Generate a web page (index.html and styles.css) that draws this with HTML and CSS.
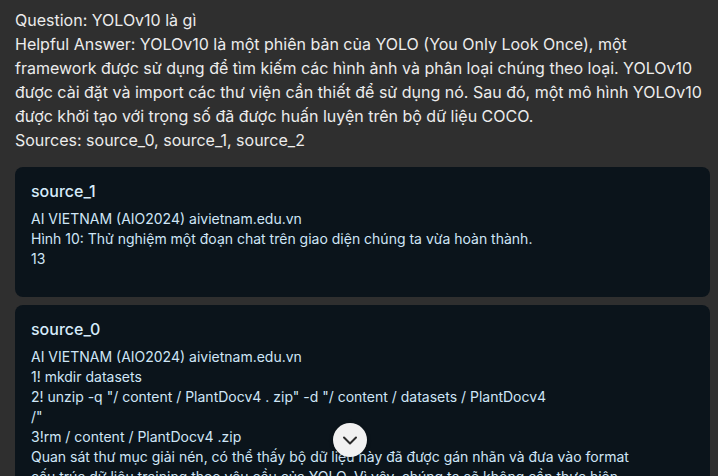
FILE: index.html
```html
<!DOCTYPE html>
<html lang="vi">
<head>
<meta charset="utf-8">
<title>Chat</title>
<link rel="stylesheet" href="styles.css">
</head>
<body>
<main class="page">
  <div class="answer">Question: YOLOv10 là gì
Helpful Answer: YOLOv10 là một phiên bản của YOLO (You Only Look Once), một framework được sử dụng để tìm kiếm các hình ảnh và phân loại chúng theo loại. YOLOv10 được cài đặt và import các thư viện cần thiết để sử dụng nó. Sau đó, một mô hình YOLOv10 được khởi tạo với trọng số đã được huấn luyện trên bộ dữ liệu COCO.
Sources: source_0, source_1, source_2</div>

  <section class="sources">
    <article class="card">
      <h3 class="card-title">source_1</h3>
      <div class="card-body">AI VIETNAM (AIO2024) aivietnam.edu.vn
Hình 10: Thử nghiệm một đoạn chat trên giao diện chúng ta vừa hoàn thành.
13</div>
    </article>
    <article class="card">
      <h3 class="card-title">source_0</h3>
      <div class="card-body">AI VIETNAM (AIO2024) aivietnam.edu.vn
1! mkdir datasets
2! unzip -q "/ content / PlantDocv4 . zip" -d "/ content / datasets / PlantDocv4
/"
3!rm / content / PlantDocv4 .zip
Quan sát thư mục giải nén, có thể thấy bộ dữ liệu này đã được gán nhãn và đưa vào format
cấu trúc dữ liệu training theo yêu cầu của YOLO. Vì vậy, chúng ta sẽ không cần thực hiện
thêm bước tiền xử lý nào nữa.</div>
    </article>
  </section>
</main>
<button class="scroll-down" aria-label="Scroll down">
  <svg width="24" height="24" viewBox="0 0 24 24" fill="none" stroke="currentColor" stroke-width="2" stroke-linecap="round" stroke-linejoin="round"><path d="M6 9.5l6 6 6-6"/></svg>
</button>
</body>
</html>
```
FILE: styles.css
```css
html, body {
  margin: 0;
  padding: 0;
  height: 100%;
  overflow: hidden;
  background: #2f2f2f;
}
body {
  font-family: Inter, "Noto Sans", sans-serif;
  color: #ececec;
}
.page {
  padding: 8px 8px 0 15px;
  display: flex;
  flex-direction: column;
  gap: 15px;
}
.answer {
  font-size: 16px;
  line-height: 24px;
  white-space: pre-line;
}
.sources {
  display: flex;
  flex-direction: column;
  gap: 8px;
}
.card {
  background: #0b141b;
  border-radius: 8px;
  padding: 14px 16px 28px 16px;
  color: #cfe6f7;
}
.card-title {
  margin: 0 0 8px 0;
  font-size: 16px;
  line-height: 20px;
  font-weight: 500;
  color: #d6ebfa;
}
.card-body {
  font-size: 14px;
  line-height: 20px;
  white-space: pre-line;
}
.scroll-down {
  position: fixed;
  left: 333px;
  top: 423px;
  width: 34px;
  height: 34px;
  border-radius: 50%;
  border: none;
  background: #f1f1f1;
  color: #2a2a2a;
  display: flex;
  align-items: center;
  justify-content: center;
  padding: 0;
  box-shadow: 0 1px 4px rgba(0,0,0,0.3);
}
```
